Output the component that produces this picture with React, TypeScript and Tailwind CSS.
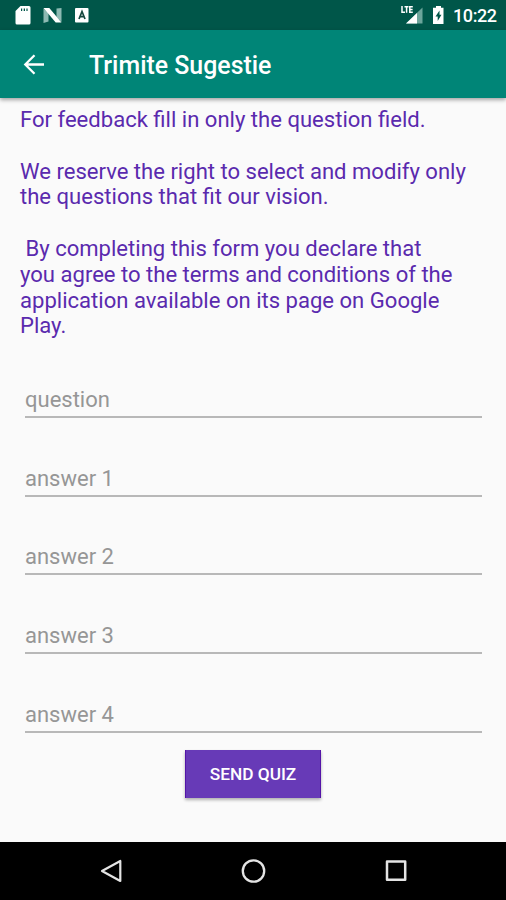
import React, { useState } from 'react';

const fields = ['question', 'answer 1', 'answer 2', 'answer 3', 'answer 4'];

const StatusBar: React.FC = () => (
  <div className="flex h-[30px] shrink-0 items-center justify-between bg-[#005649] pl-[15px] pr-[9px] text-white">
    <svg className="h-[30px] w-[76px]" viewBox="15 0 76 30" fill="none">
      <path
        fill="#fff"
        fillRule="evenodd"
        d="M20.5 6H29a1.5 1.5 0 011.500 1.500v15.500a1.500 1.500 0 01-1.500 1.500H17A1.500 1.500 0 0115.500 23V11zM21 8.500v2.500h1.200v-2.500zm2.700 0v2.500H25v-2.500zm2.700 0v2.500h1.200v-2.500z"
      />
      <path fill="#8dbab3" d="M43.5 8.5l5 4.5v8.5l-5 1.5zM56.5 8.5l5-.5v14l-5-5z" />
      <path fill="#fff" d="M43.5 8h5.8l12.2 14.5h-5.800z" />
      <rect x="75" y="8" width="13.5" height="14.5" rx="1" fill="#fff" />
      <path stroke="#17483f" strokeWidth="1.7" d="M79 19l3-7.5 3 7.5M80 16.6h4" />
    </svg>
    <div className="flex items-center">
      <svg className="h-[30px] w-[48px]" viewBox="400 0 48 30" fill="none">
        <path fill="#6ca59b" d="M422.5 7.5v16H406z" />
        <path fill="#fff" d="M417 13v10.5h-11z" />
        <path stroke="#fff" strokeWidth="1.5" d="M402 6v6.3h3M404.5 6.7h4M406.6 6.7v6M412.8 6.7h-3v5.6h3M409.8 9.5h2.8" />
        <path fill="#fff" d="M436 6h5v1.8h2.5v16.2H433V7.8h3z" />
        <path fill="#005649" d="M439.5 10.5l-4 6h2.2v4.5l3.8-6.3h-2z" />
      </svg>
      <span className="ml-[5px] mt-[2px] w-[44px] whitespace-nowrap text-[18px] font-medium leading-[22px] tracking-[-0.4px]">
        10:22
      </span>
    </div>
  </div>
);

const Toolbar: React.FC = () => (
  <header className="relative z-10 flex h-[68px] shrink-0 items-center bg-[#008577] pl-[23px] text-white shadow-[0_2px_4px_rgba(0,0,0,0.35)]">
    <button type="button" aria-label="Back">
      <svg className="h-[22px] w-[22px]" viewBox="0 0 22 22" fill="none" stroke="currentColor" strokeWidth="2.3">
        <path d="M21 11.5H2.5M11.500 2.300L2.300 11.500l9.200 9.200" />
      </svg>
    </button>
    <h1 className="ml-[44px] mt-[4px] text-[24.900px] font-medium leading-[30px]">Trimite Sugestie</h1>
  </header>
);

const NavBar: React.FC = () => (
  <nav className="flex h-[58px] shrink-0 items-center justify-between bg-black pl-[99px] pr-[97px]">
    <svg className="h-[26px] w-[26px]" viewBox="0 0 26 26" fill="none" stroke="#e4e4e4" strokeWidth="2.2" strokeLinejoin="round">
      <path d="M21.300 3v20L3 13z" />
    </svg>
    <svg className="h-[26px] w-[26px]" viewBox="0 0 26 26" fill="none" stroke="#e4e4e4" strokeWidth="2.3">
      <circle cx="12.500" cy="13" r="10.700" />
    </svg>
    <svg className="h-[26px] w-[26px]" viewBox="0 0 26 26" fill="none" stroke="#e4e4e4" strokeWidth="2.5" strokeLinejoin="round">
      <rect x="4" y="3.500" width="18.200" height="18.200" />
    </svg>
  </nav>
);

const App: React.FC = () => {
  const [values, setValues] = useState<Record<string, string>>({});

  return (
    <div className="flex h-[900px] w-[506px] flex-col overflow-hidden bg-[#fafafa] font-['Roboto',sans-serif]">
      <StatusBar />
      <Toolbar />
      <main className="flex flex-1 flex-col px-[20px] pt-[9px]">
        <div className="h-[232px] whitespace-pre text-[22.070px] leading-[25.8px] text-[#5a2aae]">
          <p>For feedback fill in only the question field.</p>
          <p className="mt-[25.8px]">{'We reserve the right to select and modify only\nthe questions that fit our vision.'}</p>
          <p className="mt-[25.8px]">
            {' By completing this form you declare that\nyou agree to the terms and conditions of the\napplication available on its page on Google\nPlay.'}
          </p>
        </div>
        <form className="flex flex-col items-center" onSubmit={(e) => e.preventDefault()}>
          {fields.map((name) => (
            <div key={name} className="flex h-[78.8px] w-full flex-col justify-end pl-[5px] pr-[4px]">
              <input
                className="h-[38px] w-full border-b-2 border-[#b8b8b8] bg-transparent pt-[3px] text-[22px] text-[#444] outline-none placeholder:text-[#969696]"
                placeholder={name}
                value={values[name] ?? ''}
                onChange={(e) => setValues({ ...values, [name]: e.target.value })}
              />
            </div>
          ))}
          <button
            type="submit"
            className="mt-[17px] h-[48px] w-[136px] border-x border-[#5414a8] bg-[#673ab7] pt-[2px] text-[17.3px] font-medium text-white shadow-[0_2px_3px_rgba(0,0,0,0.3)]"
          >
            SEND QUIZ
          </button>
        </form>
      </main>
      <NavBar />
    </div>
  );
};

export default App;
